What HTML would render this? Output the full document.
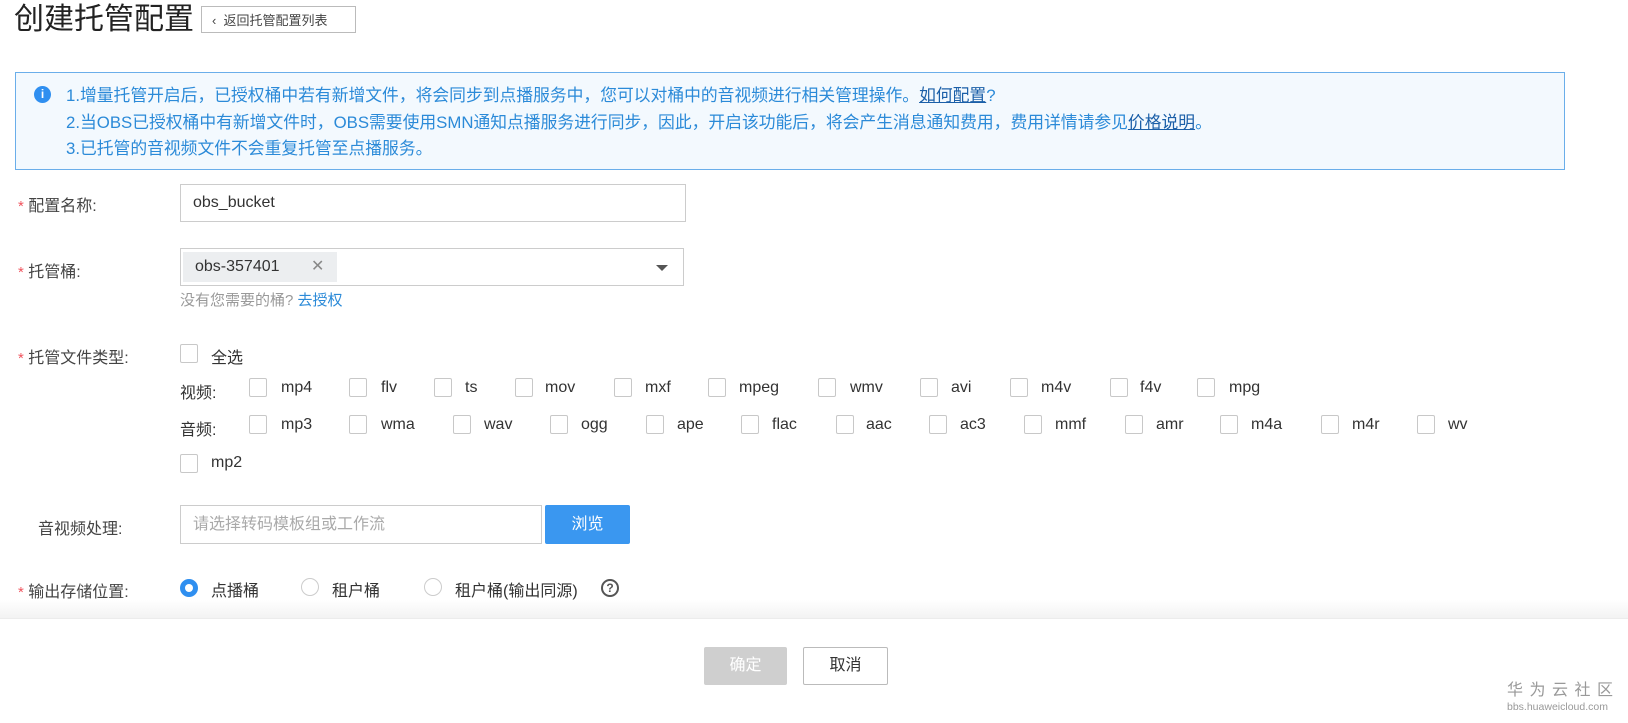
<!DOCTYPE html>
<html><head><meta charset="utf-8"><style>
body{margin:0;width:1628px;height:723px;background:#fff;font-family:"Liberation Sans","Noto Sans CJK SC",sans-serif;color:#333;position:relative;overflow:hidden}
.a{position:absolute;white-space:nowrap}
.cb{position:absolute;width:16px;height:17px;border:1px solid #c8c8c8;border-radius:2px;background:#fff}
.l{position:absolute;font-size:16px;color:#333;white-space:nowrap}
.star{color:#f0545e;font-size:15px}
.lab{font-size:16px;color:#444}
</style></head><body>
<div class="a" style="left:14px;top:0px;font-size:30px;color:#222;line-height:40px">创建托管配置</div>
<div class="a" style="left:201px;top:6px;width:155px;height:27px;border:1px solid #bbb;font-size:13px;line-height:27px;color:#444;box-sizing:border-box;padding-left:10px">‹&nbsp; 返回托管配置列表</div>

<div class="a" style="left:15px;top:72px;width:1550px;height:98px;border:1px solid #6aaeea;background:#f3f9fe;box-sizing:border-box"></div>
<div class="a" style="left:34px;top:86px;width:17px;height:17px;border-radius:50%;background:#2f8ff0;color:#fff;font-size:12px;text-align:center;line-height:17px;font-weight:bold">i</div>
<div class="a" style="left:66px;top:83px;font-size:16.8px;color:#2b8ad8;line-height:26.5px">1.增量托管开启后，已授权桶中若有新增文件，将会同步到点播服务中，您可以对桶中的音视频进行相关管理操作。<u style="color:#1b5fa8">如何配置</u>?<br>2.当OBS已授权桶中有新增文件时，OBS需要使用SMN通知点播服务进行同步，因此，开启该功能后，将会产生消息通知费用，费用详情请参见<u style="color:#1b5fa8">价格说明</u>。<br>3.已托管的音视频文件不会重复托管至点播服务。</div>

<div class="a lab" style="left:18px;top:192px"><span class="star">*</span> 配置名称:</div>
<div class="a" style="left:180px;top:184px;width:506px;height:38px;border:1px solid #ccc;box-sizing:border-box;font-size:16px;line-height:36px;padding-left:12px">obs_bucket</div>

<div class="a lab" style="left:18px;top:258px"><span class="star">*</span> 托管桶:</div>
<div class="a" style="left:180px;top:248px;width:504px;height:38px;border:1px solid #ccc;box-sizing:border-box"></div>
<div class="a" style="left:183px;top:252px;width:154px;height:30px;background:#eceef0;font-size:16px;line-height:30px;padding-left:12px;box-sizing:border-box">obs-357401<span style="position:absolute;left:128px;color:#888">✕</span></div>
<div class="a" style="left:656px;top:265px;width:0;height:0;border-left:6px solid transparent;border-right:6px solid transparent;border-top:6px solid #555"></div>
<div class="a" style="left:180px;top:289px;font-size:15px;color:#999">没有您需要的桶? <span style="color:#2b8ad8">去授权</span></div>

<div class="a lab" style="left:18px;top:344px"><span class="star">*</span> 托管文件类型:</div>
<div class="cb" style="left:180px;top:344px"></div><div class="l" style="left:211px;top:344px">全选</div>
<div class="l" style="left:180px;top:379px">视频:</div>
<div class="l" style="left:180px;top:416px">音频:</div>
<div class="cb" style="left:180px;top:454px"></div><div class="l" style="left:211px;top:454px">mp2</div>

<div id="v"></div>
<script>
var V=[[249,281,'mp4'],[349,381,'flv'],[434,465,'ts'],[515,545,'mov'],[614,645,'mxf'],[708,739,'mpeg'],[818,850,'wmv'],[920,951,'avi'],[1010,1041,'m4v'],[1110,1140,'f4v'],[1197,1229,'mpg']];
var A=[[249,281,'mp3'],[349,381,'wma'],[453,484,'wav'],[550,581,'ogg'],[646,677,'ape'],[741,772,'flac'],[836,866,'aac'],[929,960,'ac3'],[1024,1055,'mmf'],[1125,1156,'amr'],[1220,1251,'m4a'],[1321,1352,'m4r'],[1417,1448,'wv']];
var h='';
V.forEach(function(x){h+='<div class="cb" style="left:'+x[0]+'px;top:378px"></div><div class="l" style="left:'+x[1]+'px;top:379px">'+x[2]+'</div>';});
A.forEach(function(x){h+='<div class="cb" style="left:'+x[0]+'px;top:415px"></div><div class="l" style="left:'+x[1]+'px;top:416px">'+x[2]+'</div>';});
document.getElementById('v').outerHTML=h;
</script>

<div class="a lab" style="left:38px;top:515px">音视频处理:</div>
<div class="a" style="left:180px;top:505px;width:362px;height:39px;border:1px solid #ccc;box-sizing:border-box;font-size:16px;line-height:37px;padding-left:12px;color:#aaa">请选择转码模板组或工作流</div>
<div class="a" style="left:545px;top:505px;width:85px;height:39px;background:#3a97f0;border-radius:2px;color:#fff;font-size:16px;text-align:center;line-height:39px">浏览</div>

<div class="a lab" style="left:18px;top:578px"><span class="star">*</span> 输出存储位置:</div>
<div class="a" style="left:180px;top:579px;width:18px;height:18px;border-radius:50%;background:#2f8ff0;box-sizing:border-box;border:5px solid #2f8ff0"><div style="width:8px;height:8px;background:#fff;border-radius:50%"></div></div>
<div class="l" style="left:211px;top:577px">点播桶</div>
<div class="a" style="left:301px;top:578px;width:18px;height:18px;border-radius:50%;border:1px solid #ccc;box-sizing:border-box"></div>
<div class="l" style="left:332px;top:577px">租户桶</div>
<div class="a" style="left:424px;top:578px;width:18px;height:18px;border-radius:50%;border:1px solid #ccc;box-sizing:border-box"></div>
<div class="l" style="left:455px;top:577px">租户桶(输出同源)</div>
<div class="a" style="left:601px;top:579px;width:18px;height:18px;border-radius:50%;border:2px solid #555;box-sizing:border-box;font-size:12px;font-weight:bold;text-align:center;line-height:14px;color:#555">?</div>

<div class="a" style="left:0;top:600px;width:1628px;height:18px;background:linear-gradient(#fff,#f3f3f3);border-bottom:1px solid #ececec"></div>
<div class="a" style="left:704px;top:647px;width:83px;height:38px;background:#cfcfcf;color:#fff;font-size:16px;text-align:center;line-height:38px;border-radius:2px">确定</div>
<div class="a" style="left:803px;top:647px;width:85px;height:38px;border:1px solid #bbb;box-sizing:border-box;font-size:16px;text-align:center;line-height:36px;border-radius:2px">取消</div>
<div class="a" style="left:1507px;top:681px;font-size:16px;line-height:20px;color:#999;letter-spacing:6.5px">华为云社区</div>
<div class="a" style="left:1507px;top:701px;font-size:10.5px;line-height:13px;color:#999">bbs.huaweicloud.com</div>
</body></html>
